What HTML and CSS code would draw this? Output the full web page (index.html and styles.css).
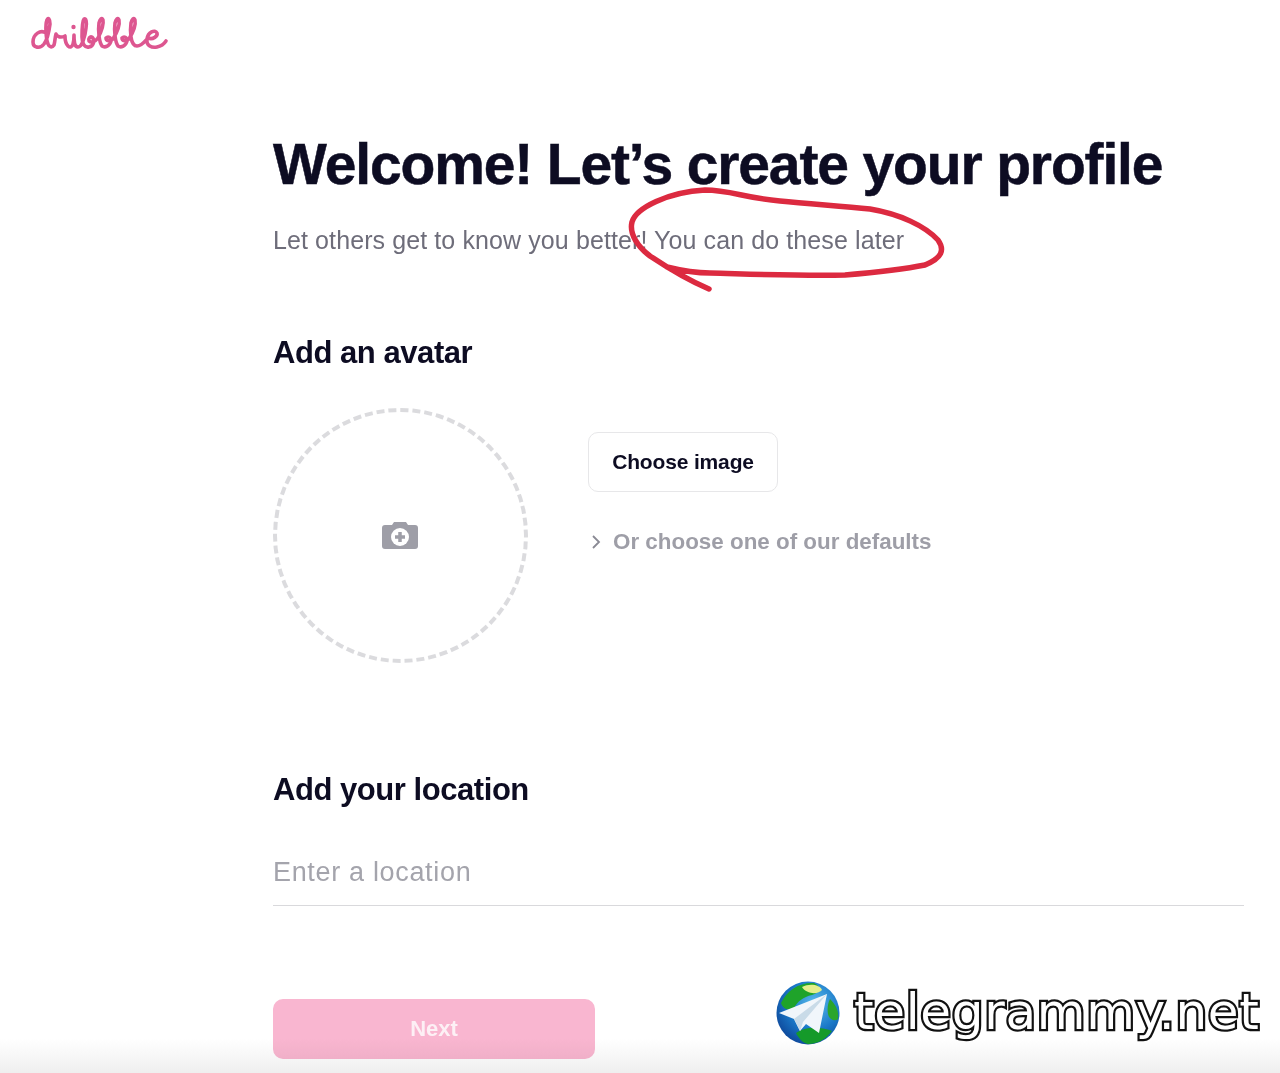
FILE: index.html
```html
<!DOCTYPE html>
<html lang="en">
<head>
<meta charset="utf-8">
<title>Dribbble</title>
<link rel="stylesheet" href="styles.css">
</head>
<body>
<div class="page">
  <header class="top">
    <svg class="logo" viewBox="0 0 140 38" role="img" aria-label="dribbble">
      <path class="logo-line" d="M18 19C10 13 3 20 3 27C3 33 10 34 14 29C17 25 19 17 20 9C20 4 18 2 17 5C15 10 16 24 18 29C19 32 22 33 24 30C25 27 25 22 26 19C27 22 31 23 35 21C35 24 35 28 38 31C40 33 42 32 43 29C44 26 44 23 44 20C44 26 44 32 48 32C52 32 55 22 56 13C57 7 56 3 54 4C52 6 52 14 52 22C52 29 55 33 59 32C64 31 65 25 62 22C60 21 58 24 59 26C61 28 65 27 68 23C71 17 74 10 73 5C72 2 70 4 69 8C68 15 69 27 72 31C75 33 80 31 81 26C81 22 78 21 76 23C76 26 80 27 83 24C86 19 90 10 89 5C88 2 86 4 85 8C84 15 85 27 88 31C91 33 96 31 97 26C97 22 94 21 92 23C92 26 96 27 99 24C102 19 106 10 105 5C104 2 102 4 101 8C100 15 100 31 107 31C112 31 115 26 118 23C123 25 128 21 127 18C125 14 118 17 117 24C116 31 122 33 127 32C132 31 134 29 136 26"/>
      <circle class="logo-dot" cx="43.500" cy="12" r="2.200"/>
    </svg>
  </header>
  <main class="content">
    <h1 class="title">Welcome! Let’s create your profile</h1>
    <p class="lead">Let others get to know you better! You can do these later</p>
    <h2 class="section-title avatar-title">Add an avatar</h2>
    <section class="avatar-row">
      <div class="drop">
        <svg class="camera" viewBox="0 0 36 28" aria-hidden="true">
          <path class="camera-body" d="M3 4H10L12 1H24L26 4H33C35 4 36 5 36 7V25C36 27 35 28 33 28H3C1 28 0 27 0 25V7C0 5 1 4 3 4Z"/>
          <circle class="camera-lens" cx="18" cy="16" r="9"/>
          <path class="camera-plus" d="M18 11V21M13 16H23"/>
        </svg>
      </div>
      <div class="avatar-actions">
        <button class="choose" type="button">Choose image</button>
        <div class="defaults">
          <svg class="chevron" viewBox="0 0 10 16" aria-hidden="true"><path d="M2 2L8 8L2 14"/></svg>
          <span>Or choose one of our defaults</span>
        </div>
      </div>
    </section>
    <h2 class="section-title location-title">Add your location</h2>
    <div class="location">Enter a location</div>
    <button class="next" type="button">Next</button>
  </main>

  <svg class="scribble" viewBox="0 0 1280 1073" aria-hidden="true">
    <path d="M709 289C690 281 668 268 650 256C638 247 629 234 632 222C636 208 668 192 705 190C730 190 745 198 780 201C810 204 840 206 870 209C900 214 925 226 938 240C945 250 942 258 925 265C900 270 880 272 845 275C800 276 750 274 710 273C690 273 675 269 667 267"/>
  </svg>

  <div class="bottom-fade"></div>

  <div class="watermark">
    <svg class="globe" viewBox="0 0 64 64" aria-hidden="true">
      <defs>
        <radialGradient id="sea" cx="0.6" cy="0.35" r="0.75">
          <stop offset="0" stop-color="#5bbcec"/>
          <stop offset="0.55" stop-color="#1a78c8"/>
          <stop offset="1" stop-color="#0c3f92"/>
        </radialGradient>
      </defs>
      <circle cx="32" cy="32" r="31.500" fill="url(#sea)"/>
      <path fill="#1fa32a" d="M5 22C11 9 24 1 38 2C46 6 44 12 36 14C27 16 22 20 18 27C12 30 7 28 5 22Z"/>
      <path fill="#e4ee8a" d="M26 6C34 2 44 4 46 9C42 14 30 13 26 6Z"/>
      <path fill="#159a2a" d="M20 52C30 45 44 46 56 50C50 58 42 63 32 63C27 62 23 58 20 52Z"/>
      <path fill="#2ba52c" d="M54 18C60 24 63 30 62 38C58 41 53 38 52 33C51 27 52 22 54 18Z"/>
      <path fill="#f1f6fb" d="M3 32L51 13L43 52L30 43L24 50L18 38Z"/>
      <path fill="#c9dbe8" d="M18 38L51 13L27 41L24 50Z"/>
    </svg>
    <span class="wm-text">telegrammy.net</span>
  </div>
</div>
</body>
</html>
```

FILE: styles.css
```css
* { box-sizing: border-box; }
html, body { margin: 0; padding: 0; background: #fff; }
body { font-family: "Liberation Sans", Arial, sans-serif; color: #0d0c22; }

.page {
  position: relative;
  width: 1280px;
  height: 1073px;
  overflow: hidden;
  background: #fff;
}

.top { height: 82px; padding: 15px 0 0 30px; }
.logo { display: block; width: 140px; height: 38px; }
.logo-line { fill: none; stroke: #dd5690; stroke-width: 3.600; stroke-linecap: round; stroke-linejoin: round; }
.logo-dot { fill: #dd5690; }

.content { padding: 0 36px 0 273px; }

.title {
  margin: 49px 0 0;
  font-size: 57px;
  line-height: 66px;
  font-weight: 700;
  letter-spacing: -1.14px;
  -webkit-text-stroke: 0.5px #0d0c22;
  color: #0d0c22;
  white-space: nowrap;
}
.lead {
  margin: 27px 0 0;
  font-size: 25px;
  line-height: 32px;
  letter-spacing: 0.1px;
  color: #6e6d7a;
  white-space: nowrap;
}
.section-title {
  margin: 0;
  font-size: 31px;
  line-height: 38px;
  font-weight: 700;
  letter-spacing: -0.45px;
  color: #0d0c22;
}
.avatar-title { margin-top: 78px; }
.avatar-row { display: flex; margin-top: 36px; gap: 60px; }
.drop {
  width: 255px;
  height: 255px;
  padding: 0 2px 2px 0;
  border-radius: 50%;
  border: 4px dashed #dbdbde;
  display: flex;
  align-items: center;
  justify-content: center;
}
.camera { width: 36px; height: 28px; }
.camera-body { fill: #9e9ea7; }
.camera-lens { fill: #fff; }
.camera-plus { fill: none; stroke: #9e9ea7; stroke-width: 3.500; }

.avatar-actions { display: flex; flex-direction: column; align-items: flex-start; padding-top: 24px; }
.choose {
  width: 190px;
  height: 60px;
  border: 1px solid #e7e7e9;
  border-radius: 10px;
  background: #fff;
  font-family: "Liberation Sans", Arial, sans-serif;
  font-size: 21px;
  font-weight: 700;
  color: #0d0c22;
  letter-spacing: -0.15px;
}
.defaults {
  display: flex;
  align-items: center;
  gap: 12px;
  margin-top: 35px;
  padding-left: 3px;
  font-size: 22.400px;
  line-height: 30px;
  font-weight: 700;
  color: #9e9ea7;
}
.chevron { width: 10px; height: 16px; }
.chevron path { fill: none; stroke: #8a8a94; stroke-width: 1.800; }

.location-title { margin-top: 108px; }
.location {
  margin-top: 43px;
  height: 54px;
  padding-top: 4px;
  border-bottom: 1px solid #d9d9dc;
  font-size: 27px;
  line-height: 32px;
  color: #a4a4ac;
  letter-spacing: 0.67px;
}
.next {
  display: block;
  margin-top: 93px;
  width: 322px;
  height: 60px;
  border: 0;
  border-radius: 10px;
  background: #f9b6d0;
  color: #fdf0f5;
  font-family: "Liberation Sans", Arial, sans-serif;
  font-size: 22px;
  font-weight: 700;
}

.scribble {
  position: absolute;
  left: 0;
  top: 0;
  width: 1280px;
  height: 1073px;
  pointer-events: none;
}
.scribble path { fill: none; stroke: #dc2a40; stroke-width: 5.500; stroke-linecap: round; stroke-linejoin: round; }

.bottom-fade {
  position: absolute;
  left: 0;
  right: 0;
  bottom: 0;
  height: 34px;
  background: linear-gradient(#ffffff, #efefef);
  mix-blend-mode: multiply;
  pointer-events: none;
}

.watermark {
  position: absolute;
  left: 776px;
  top: 981px;
  display: flex;
  align-items: center;
  gap: 14px;
}
.globe { width: 64px; height: 64px; flex: none; }
.wm-text {
  font-family: "DejaVu Sans", sans-serif;
  font-size: 50px;
  line-height: 60px;
  color: #fff;
  -webkit-text-stroke: 4.500px #111;
  paint-order: stroke fill;
  white-space: nowrap;
  letter-spacing: 0.7px;
  position: relative;
  top: -1px;
}
```
